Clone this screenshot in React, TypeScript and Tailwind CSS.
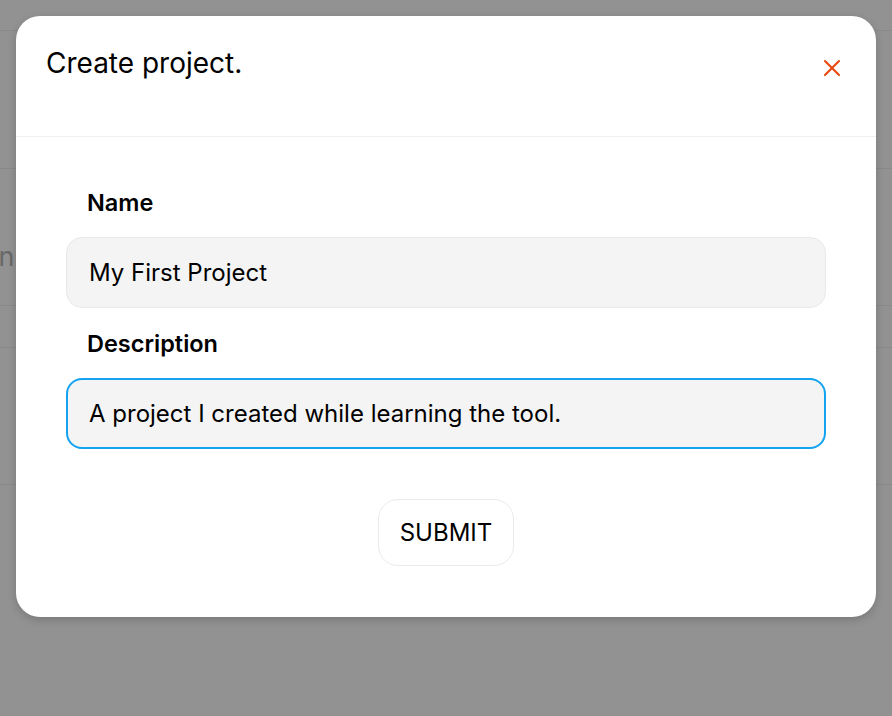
import { X } from 'lucide-react';

const font = { fontFamily: 'Inter, "Noto Sans", sans-serif' };

function Field({ label, value, active }: { label: string; value: string; active?: boolean }) {
  return (
    <div className="flex flex-col">
      <label className="pl-[21px] text-[23.5px] leading-[28px] font-semibold text-black mb-[20px]">{label}</label>
      <input
        readOnly
        value={value}
        className={`h-[71px] w-full rounded-[16px] bg-[#f4f4f4] text-[24px] text-black outline-none ${
          active ? 'border-2 border-[#13a3ef] px-[21px]' : 'border border-[#e9e9e9] px-[22px]'
        }`}
      />
    </div>
  );
}

export default function App() {
  return (
    <div className="relative h-[716px] w-full overflow-hidden bg-[#f4f4f4]" style={font}>
      {/* page underneath the dialog */}
      <div className="flex flex-col">
        <div className="h-[31px] border-b border-[#e5e5e5]" />
        <div className="h-[138px] border-b border-[#e5e5e5]" />
        <div className="h-[137px] border-b border-[#e5e5e5] pt-[68px]">
          <span className="-ml-[67px] text-[27px] text-[#adadad]">Action</span>
        </div>
        <div className="h-[42px] border-b border-[#e5e5e5]" />
        <div className="h-[137px] border-b border-[#e5e5e5]" />
      </div>

      {/* overlay + dialog */}
      <div className="absolute inset-0 bg-black/40">
        <div className="absolute left-4 top-4 w-[860px] rounded-[24px] bg-white shadow-[0_3px_8px_rgba(0,0,0,0.18)]">
          <div className="flex h-[121px] items-start justify-between border-b border-[#efefef] pl-[30px] pr-[30px] pt-[30px]">
            <h2 className="text-[28px] leading-[34px] font-normal text-black">Create project.</h2>
            <button className="mt-[8px] flex h-[28px] w-[28px] items-center justify-center">
              <X className="h-[28px] w-[28px] text-[#e9480e]" strokeWidth={1.8} />
            </button>
          </div>

          <div className="flex flex-col px-[50px] pt-[52px] pb-[51px]">
            <Field label="Name" value="My First Project" />
            <div className="h-[22px]" />
            <Field label="Description" value="A project I created while learning the tool." active />
            <div className="mt-[50px] flex justify-center">
              <button className="h-[67px] w-[136px] rounded-[20px] border-[1.5px] border-[#ebebeb] bg-white text-[24px] text-black">
                SUBMIT
              </button>
            </div>
          </div>
        </div>
      </div>
    </div>
  );
}
